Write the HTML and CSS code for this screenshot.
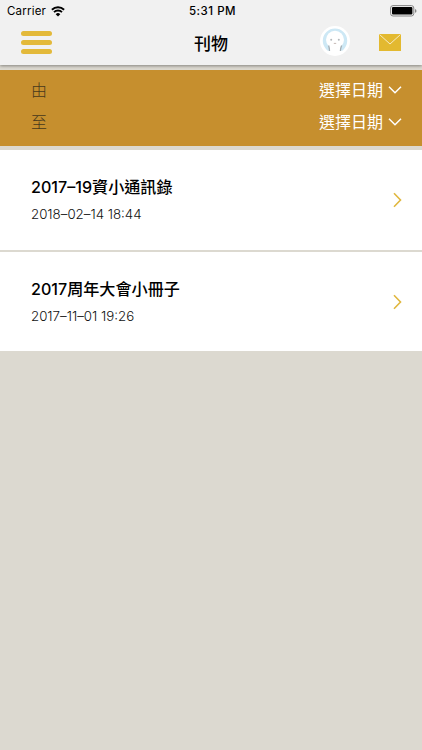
FILE: index.html
```
<!DOCTYPE html>
<html lang="zh-Hant">
<head>
    <meta charset="UTF-8">
    <meta name="viewport" content="width=device-width, initial-scale=1.0">
    <title>刊物</title>
    <link rel="stylesheet" href="styles.css">
</head>
<body>
    <header>
        <div class="status-bar">
            <div class="carrier">
                <span>Carrier</span>
                <svg width="14" height="11" viewBox="0 0 14 11">
                    <path d="M.9 3.7a8.7 8.7 0 0 1 12.2 0M3 6.1a5.7 5.7 0 0 1 8 0" fill="none" stroke="#000" stroke-width="1.9"/>
                    <path d="M7 10.5 4.7 8.2a3.3 3.3 0 0 1 4.6 0z"/>
                </svg>
            </div>
            <div class="clock">5:31 PM</div>
            <svg class="battery" width="28" height="12" viewBox="0 0 28 12">
                <rect x=".6" y=".6" width="23.2" height="10.4" rx="2.4" fill="#f1f1f1" stroke="#858585"/>
                <rect x="2" y="2" width="20.4" height="7.6" rx="1" fill="#000"/>
                <path d="M25 4v3.8q1.5-.5 1.5-1.9T25 4z" fill="#858585"/>
            </svg>
        </div>
        <div class="nav-bar">
            <div class="menu-btn">
                <span></span>
                <span></span>
                <span></span>
            </div>
            <h1>刊物</h1>
            <div class="nav-icons">
                <svg class="avatar" width="30" height="30" viewBox="0 0 30 30">
                    <circle cx="15" cy="15" r="15" fill="#fff"/>
                    <path d="M6 23A12.2 12.2 0 1 1 24 23q-1 2-3.5 2h-11Q7 25 6 23z" fill="#cde8f5"/>
                    <path d="M9.5 18h11l1 8H8.500z" fill="#fff"/>
                    <circle cx="15" cy="13.8" r="9" fill="#fff"/>
                    <path d="M8.6 19.5q.9 2.5.9 5.500M21.6 19.5q-1.1 2.500-1.2 5.500" fill="none" stroke="#a3afb6" stroke-width="1.3"/>
                    <circle cx="11.2" cy="13.7" r="1" fill="#b4b8bb"/>
                    <circle cx="18.8" cy="13.7" r="1" fill="#b4b8bb"/>
                    <path d="M13.8 17.4h2.4" stroke="#c5b9b5"/>
                </svg>
                <svg width="22" height="17" viewBox="0 0 22 17">
                    <rect width="22" height="17" fill="#e3b930"/>
                    <path d="M.5.5 11 10 21.5.5" fill="none" stroke="#f6ebc4"/>
                </svg>
            </div>
        </div>
    </header>

    <div class="filter">
        <div class="filter-row">
            <label>由</label>
            <div class="date-select">
                <span>選擇日期</span>
                <svg width="14" height="8" viewBox="0 0 14 8"><path d="M1 .8 7 6.8l6-6"/></svg>
            </div>
        </div>
        <div class="filter-row">
            <label>至</label>
            <div class="date-select">
                <span>選擇日期</span>
                <svg width="14" height="8" viewBox="0 0 14 8"><path d="M1 .8 7 6.8l6-6"/></svg>
            </div>
        </div>
    </div>

    <div class="list">
        <div class="item">
            <div>
                <h2>2017–19資小通訊錄</h2>
                <p>2018–02–14 18:44</p>
            </div>
            <svg width="9" height="16" viewBox="0 0 9 16"><path d="M1 1.3 7.5 8 1 14.7"/></svg>
        </div>
        <div class="item">
            <div>
                <h2>2017周年大會小冊子</h2>
                <p>2017–11–01 19:26</p>
            </div>
            <svg width="9" height="16" viewBox="0 0 9 16"><path d="M1 1.3 7.5 8 1 14.7"/></svg>
        </div>
    </div>
</body>
</html>
```
FILE: styles.css
```
* {
    box-sizing: border-box;
}
body {
    margin: 0;
    background-color: #dcd9d0;
    font-family: Inter, "Noto Sans CJK TC", sans-serif;
    color: #000;
}
svg {
    display: block;
}
h1, h2, p {
    margin: 0;
}
header {
    height: 65px;
    background-color: #f1f1f1;
    box-shadow: 0 1px 3px rgba(0,0,0,0.4);
}
.status-bar {
    display: grid;
    grid-template-columns: 1fr auto 1fr;
    align-items: center;
    height: 22px;
    padding: 0 4px 0 7px;
    font-size: 11.5px;
}
.carrier {
    display: flex;
    align-items: center;
    gap: 5px;
    letter-spacing: 0.2px;
}
.clock {
    font-weight: 500;
    letter-spacing: 0.5px;
}
.battery {
    justify-self: end;
}
.nav-bar {
    display: grid;
    grid-template-columns: 1fr auto 1fr;
    align-items: center;
    height: 41px;
    padding: 0 21px;
}
.menu-btn {
    display: flex;
    flex-direction: column;
    gap: 4px;
}
.menu-btn span {
    width: 31px;
    height: 5px;
    border-radius: 3px;
    background-color: #e3b93a;
}
h1 {
    padding-top: 2px;
    font-size: 17px;
    line-height: 24px;
    font-weight: 500;
}
.nav-icons {
    display: flex;
    align-items: center;
    justify-content: flex-end;
    gap: 29px;
}
.avatar {
    margin-bottom: 3px;
}
.filter {
    margin-top: 5px;
    height: 76px;
    padding: 4px 20px 0 31px;
    background-color: #c68f2e;
}
.filter-row {
    display: flex;
    justify-content: space-between;
    align-items: center;
    height: 32px;
    font-size: 16px;
    line-height: 24px;
}
.filter-row label {
    color: #46381c;
    font-weight: 300;
}
.date-select {
    display: flex;
    align-items: center;
    gap: 5px;
    color: #fff;
}
.date-select path {
    fill: none;
    stroke: #fff;
    stroke-width: 1.5;
}
.list {
    display: flex;
    flex-direction: column;
    gap: 2px;
    margin-top: 4px;
}
.item {
    display: flex;
    justify-content: space-between;
    align-items: center;
    height: 100px;
    padding: 0 20px 0 31px;
    background-color: #fff;
}
.item:last-child {
    height: 99px;
    padding-top: 1px;
}
.item h2 {
    font-size: 16.1px;
    line-height: 24px;
    font-weight: 500;
}
.item p {
    margin-top: 3px;
    font-size: 13.3px;
    line-height: 24px;
    font-weight: 300;
    color: #111;
}
.item path {
    fill: none;
    stroke: #e0b73e;
    stroke-width: 1.6;
}
```
